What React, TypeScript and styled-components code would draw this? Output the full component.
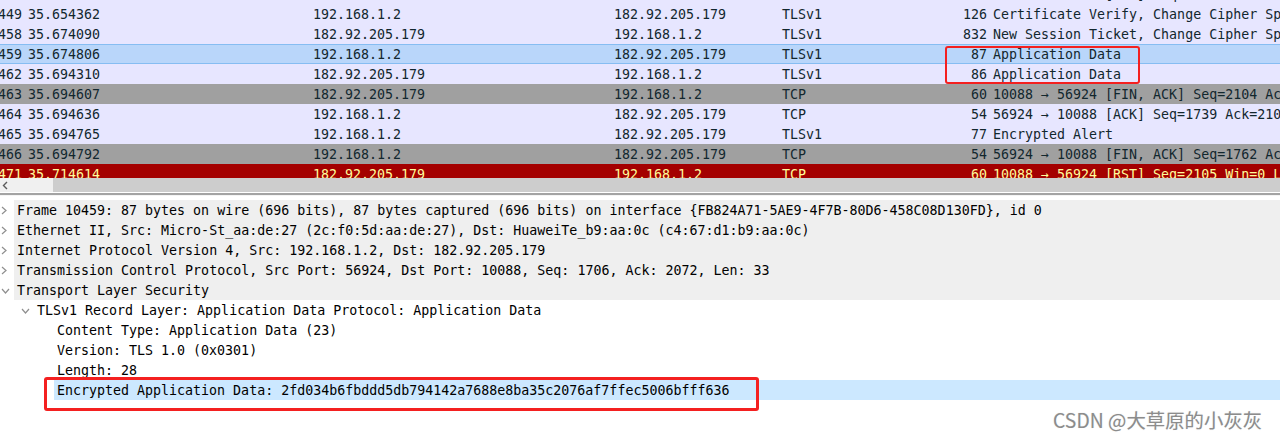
import React from "react";
import styled, { createGlobalStyle, css } from "styled-components";

const Global = createGlobalStyle`
  html, body { margin: 0; padding: 0; background: #ffffff; overflow: hidden; }
  #root { width: 1280px; height: 438px; }
`;

const MONO = `"DejaVu Sans Mono", "Liberation Mono", monospace`;

const Screen = styled.div`
  position: relative;
  width: 1280px;
  height: 438px;
  overflow: hidden;
  background: #ffffff;
  font-family: ${MONO};
  font-size: 13.3px;
`;

const PacketList = styled.div`
  height: 178px;
  overflow: hidden;
  background: #ffffff;
`;

const PacketScroll = styled.div`
  margin-top: -16px;
  margin-left: -40px;
  width: 1400px;
`;

type Kind = "normal" | "selected" | "gray" | "red";

const kindStyles: Record<Kind, ReturnType<typeof css>> = {
  normal: css`
    background: #e7e6ff;
    color: #12272e;
  `,
  selected: css`
    background: #b9d6fa;
    color: #12272e;
    box-shadow: inset 0 1px 0 #86bdf2, inset 0 -1px 0 #86bdf2;
  `,
  gray: css`
    background: #a0a0a0;
    color: #12272e;
  `,
  red: css`
    background: #a40000;
    color: #fffc9c;
  `,
};

const PacketRow = styled.div<{ $kind: Kind }>`
  display: grid;
  grid-template-columns: 65px 285px 301px 168px 151px 60px 1fr;
  height: 20px;
  white-space: nowrap;
  ${(p) => kindStyles[p.$kind]}
`;

const Cell = styled.div<{ $right?: boolean }>`
  overflow: hidden;
  display: flex;
  height: 20px;
  box-sizing: border-box;
  line-height: 20px;
  justify-content: ${(p) => (p.$right ? "flex-end" : "flex-start")};
  padding: ${(p) => (p.$right ? "1px 3px 0 0" : "1px 0 0 3px")};
`;

const HScrollbar = styled.div`
  display: flex;
  height: 14px;
  background: #f0f0f0;
`;

const ArrowButton = styled.div`
  width: 53px;
  display: flex;
  align-items: center;
  padding-left: 2px;
  box-sizing: border-box;
`;

const Thumb = styled.div`
  flex: 1;
  background: #cdcdcd;
`;

const Splitter = styled.div`
  height: 4px;
  box-sizing: border-box;
  border-top: 1px solid #ffffff;
  border-bottom: 1px solid #f4f4f4;
  background: #a3a3a3;
`;

const Tree = styled.div`
  padding-top: 4px;
  color: #000000;
`;

const TreeRow = styled.div<{ $level: number }>`
  display: flex;
  height: 20px;
  padding-left: ${(p) => p.$level * 20}px;
  white-space: nowrap;
`;

const Toggle = styled.div`
  width: 14px;
  flex: none;
  display: flex;
  align-items: center;
  padding: 1px 0 0 1px;
  box-sizing: border-box;
`;

const Label = styled.div<{ $shade?: "parent" | "selected" }>`
  flex: 1;
  height: 20px;
  box-sizing: border-box;
  line-height: 20px;
  padding: 1px 0 0 3px;
  overflow: hidden;
  background: ${(p) =>
    p.$shade === "parent" ? "#efefef" : p.$shade === "selected" ? "#cce8ff" : "transparent"};
`;

const Annotation = styled.div<{ $x: number; $y: number; $w: number; $h: number; $t: number }>`
  position: absolute;
  left: ${(p) => p.$x}px;
  top: ${(p) => p.$y}px;
  width: ${(p) => p.$w}px;
  height: ${(p) => p.$h}px;
  box-sizing: border-box;
  border: ${(p) => p.$t}px solid #f42020;
  border-radius: 3px;
  pointer-events: none;
`;

const Watermark = styled.div`
  position: absolute;
  left: 1053px;
  top: 406px;
  font-family: "Noto Sans CJK SC", "Noto Sans", sans-serif;
  font-size: 19.4px;
  line-height: 27px;
  color: #8c8c8c;
  text-shadow: 1px 1px 1px rgba(255, 255, 255, 0.9), 0 0 1px rgba(120, 120, 120, 0.4);
  white-space: nowrap;
`;

const ChevronRight = () => (
  <svg width="6" height="9" viewBox="0 0 6 9">
    <path d="M1 1 L5 4.5 L1 8" fill="none" stroke="#8f8f8f" strokeWidth="1.2" />
  </svg>
);

const ChevronDown = () => (
  <svg width="9" height="6" viewBox="0 0 9 6">
    <path d="M1 1 L4.5 5 L8 1" fill="none" stroke="#8f8f8f" strokeWidth="1.2" />
  </svg>
);

const ScrollLeft = () => (
  <svg width="6" height="9" viewBox="0 0 6 9">
    <path d="M5 1 L1.5 4.5 L5 8" fill="none" stroke="#5a5a5a" strokeWidth="1.4" />
  </svg>
);

type Packet = {
  no: string;
  time: string;
  src: string;
  dst: string;
  proto: string;
  len: string;
  info: string;
  kind: Kind;
};

const packets: Packet[] = [
  { no: "10448", time: "35.654120", src: "182.92.205.179", dst: "192.168.1.2", proto: "TCP", len: "60", info: "10088 → 56924 [ACK] Seq=1611 Ack=1706 Win=30336 Len=0", kind: "normal" },
  { no: "10449", time: "35.654362", src: "192.168.1.2", dst: "182.92.205.179", proto: "TLSv1", len: "126", info: "Certificate Verify, Change Cipher Spec, Encrypted Handshake Message", kind: "normal" },
  { no: "10458", time: "35.674090", src: "182.92.205.179", dst: "192.168.1.2", proto: "TLSv1", len: "832", info: "New Session Ticket, Change Cipher Spec, Encrypted Handshake Message", kind: "normal" },
  { no: "10459", time: "35.674806", src: "192.168.1.2", dst: "182.92.205.179", proto: "TLSv1", len: "87", info: "Application Data", kind: "selected" },
  { no: "10462", time: "35.694310", src: "182.92.205.179", dst: "192.168.1.2", proto: "TLSv1", len: "86", info: "Application Data", kind: "normal" },
  { no: "10463", time: "35.694607", src: "182.92.205.179", dst: "192.168.1.2", proto: "TCP", len: "60", info: "10088 → 56924 [FIN, ACK] Seq=2104 Ack=1739 Win=30336 Len=0", kind: "gray" },
  { no: "10464", time: "35.694636", src: "192.168.1.2", dst: "182.92.205.179", proto: "TCP", len: "54", info: "56924 → 10088 [ACK] Seq=1739 Ack=2105 Win=65024 Len=0", kind: "normal" },
  { no: "10465", time: "35.694765", src: "192.168.1.2", dst: "182.92.205.179", proto: "TLSv1", len: "77", info: "Encrypted Alert", kind: "normal" },
  { no: "10466", time: "35.694792", src: "192.168.1.2", dst: "182.92.205.179", proto: "TCP", len: "54", info: "56924 → 10088 [FIN, ACK] Seq=1762 Ack=2105 Win=65024 Len=0", kind: "gray" },
  { no: "10471", time: "35.714614", src: "182.92.205.179", dst: "192.168.1.2", proto: "TCP", len: "60", info: "10088 → 56924 [RST] Seq=2105 Win=0 Len=0", kind: "red" },
];

type Node = {
  level: number;
  open?: boolean;
  leaf?: boolean;
  shade?: "parent" | "selected";
  text: string;
};

const nodes: Node[] = [
  { level: 0, shade: "parent", text: "Frame 10459: 87 bytes on wire (696 bits), 87 bytes captured (696 bits) on interface {FB824A71-5AE9-4F7B-80D6-458C08D130FD}, id 0" },
  { level: 0, shade: "parent", text: "Ethernet II, Src: Micro-St_aa:de:27 (2c:f0:5d:aa:de:27), Dst: HuaweiTe_b9:aa:0c (c4:67:d1:b9:aa:0c)" },
  { level: 0, shade: "parent", text: "Internet Protocol Version 4, Src: 192.168.1.2, Dst: 182.92.205.179" },
  { level: 0, shade: "parent", text: "Transmission Control Protocol, Src Port: 56924, Dst Port: 10088, Seq: 1706, Ack: 2072, Len: 33" },
  { level: 0, open: true, shade: "parent", text: "Transport Layer Security" },
  { level: 1, open: true, text: "TLSv1 Record Layer: Application Data Protocol: Application Data" },
  { level: 2, leaf: true, text: "Content Type: Application Data (23)" },
  { level: 2, leaf: true, text: "Version: TLS 1.0 (0x0301)" },
  { level: 2, leaf: true, text: "Length: 28" },
  { level: 2, leaf: true, shade: "selected", text: "Encrypted Application Data: 2fd034b6fbddd5db794142a7688e8ba35c2076af7ffec5006bfff636" },
];

export default function App() {
  return (
    <>
      <Global />
      <Screen>
        <PacketList>
          <PacketScroll>
            {packets.map((p) => (
              <PacketRow key={p.no} $kind={p.kind}>
                <Cell $right>{p.no}</Cell>
                <Cell>{p.time}</Cell>
                <Cell>{p.src}</Cell>
                <Cell>{p.dst}</Cell>
                <Cell>{p.proto}</Cell>
                <Cell $right>{p.len}</Cell>
                <Cell>{p.info}</Cell>
              </PacketRow>
            ))}
          </PacketScroll>
        </PacketList>
        <HScrollbar>
          <ArrowButton>
            <ScrollLeft />
          </ArrowButton>
          <Thumb />
        </HScrollbar>
        <Splitter />
        <Tree>
          {nodes.map((n, i) => (
            <TreeRow key={i} $level={n.level}>
              <Toggle>{n.leaf ? null : n.open ? <ChevronDown /> : <ChevronRight />}</Toggle>
              <Label $shade={n.shade}>{n.text}</Label>
            </TreeRow>
          ))}
        </Tree>
        <Annotation $x={945} $y={46} $w={195} $h={38} $t={2.5} />
        <Annotation $x={44} $y={377} $w={715} $h={34} $t={3} />
        <Watermark>CSDN @大草原的小灰灰</Watermark>
      </Screen>
    </>
  );
}
